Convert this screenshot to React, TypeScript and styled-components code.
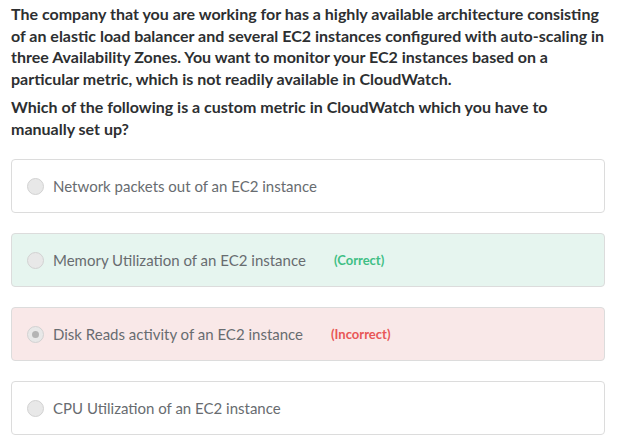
import React, {FunctionComponent} from 'react';
import styled, {createGlobalStyle} from 'styled-components';

type Status = 'none' | 'correct' | 'incorrect';

interface Answer {
    id: string;
    text: string;
    status: Status;
    checked?: boolean;
}

const answers: Answer[] = [
    {id: 'a', text: 'Network packets out of an EC2 instance', status: 'none'},
    {id: 'b', text: 'Memory Utilization of an EC2 instance', status: 'correct'},
    {id: 'c', text: 'Disk Reads activity of an EC2 instance', status: 'incorrect', checked: true},
    {id: 'd', text: 'CPU Utilization of an EC2 instance', status: 'none'}
];

const GlobalStyle = createGlobalStyle`
    body {
        margin: 0;
        background: #fff;
        font-family: Lato, 'Open Sans', sans-serif;
    }
`;

const Page = styled.div`
    width: 594px;
    padding: 3px 0 0 11px;
`;

const Prompt = styled.p`
    margin: 0 0 7px;
    font-size: 16px;
    line-height: 21.5px;
    font-weight: 700;
    color: #2d2f31;
`;

const List = styled.div`
    display: flex;
    flex-direction: column;
    gap: 20px;
    margin-top: 20px;
`;

const cardBg: Record<Status, string> = {
    none: '#ffffff',
    correct: '#e6f5ef',
    incorrect: '#f9e8e8'
};

const Card = styled.label<{$status: Status}>`
    box-sizing: border-box;
    height: 54px;
    display: flex;
    align-items: center;
    padding: 0 15px;
    border: 1px solid #dcdcdc;
    border-radius: 4px;
    background: ${props => cardBg[props.$status]};
`;

const Radio = styled.span<{$checked?: boolean}>`
    box-sizing: border-box;
    width: 17px;
    height: 17px;
    border-radius: 50%;
    border: 1px solid #d2d2d2;
    background: #e8e8e8;
    display: inline-flex;
    align-items: center;
    justify-content: center;
    margin-right: 9px;
    flex: none;

    &::after {
        content: '';
        display: ${props => (props.$checked ? 'block' : 'none')};
        width: 7px;
        height: 7px;
        border-radius: 50%;
        background: #b4b4b4;
    }
`;

const Label = styled.span`
    font-size: 15px;
    font-weight: 400;
    color: #686c70;
`;

const Verdict = styled.span<{$status: Status}>`
    margin-left: 28px;
    font-size: 13px;
    font-weight: 700;
    color: ${props => (props.$status === 'correct' ? '#3fbf85' : '#e85656')};
`;

const App: FunctionComponent = () => {
    return (
        <Page>
            <GlobalStyle />
            <Prompt>
                The company that you are working for has a highly available architecture consisting of an elastic
                load balancer and several EC2 instances configured with auto-scaling in three Availability Zones. You
                want to monitor your EC2 instances based on a particular metric, which is not readily available in
                CloudWatch.
            </Prompt>
            <Prompt>Which of the following is a custom metric in CloudWatch which you have to manually set up?</Prompt>
            <List>
                {answers.map(answer => (
                    <Card key={answer.id} $status={answer.status}>
                        <Radio $checked={answer.checked} />
                        <Label>{answer.text}</Label>
                        {answer.status !== 'none' && (
                            <Verdict $status={answer.status}>
                                {answer.status === 'correct' ? '(Correct)' : '(Incorrect)'}
                            </Verdict>
                        )}
                    </Card>
                ))}
            </List>
        </Page>
    );
};

export default App;
